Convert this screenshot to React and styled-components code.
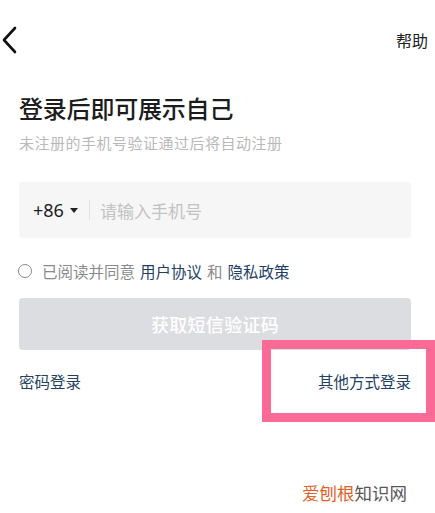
import React from 'react';
import styled, { createGlobalStyle } from 'styled-components';

const GlobalStyle = createGlobalStyle`
    html, body {
        margin: 0;
        padding: 0;
        background: #fff;
    }
    body {
        font-family: "Noto Sans", "Noto Sans CJK SC", sans-serif;
    }
`;

const Page = styled.div`
    position: relative;
    width: 435px;
    height: 513px;
    overflow: hidden;
    background: #fff;
    font-family: "Noto Sans CJK SC", "Noto Sans", sans-serif;
`;

const Header = styled.div`
    display: flex;
    align-items: center;
    justify-content: space-between;
    height: 80px;
    padding: 0 7px 0 2px;
`;

const BackButton = styled.button`
    display: flex;
    padding: 0;
    border: none;
    background: none;
`;

const HelpLink = styled.span`
    font-size: 16px;
    color: #222;
`;

const Content = styled.div`
    padding: 0 24px 0 19px;
`;

const Title = styled.h1`
    margin: 11px 0 0;
    font-size: 24px;
    line-height: 34px;
    font-weight: 500;
    color: #1c1c1c;
    letter-spacing: -0.2px;
`;

const Subtitle = styled.p`
    margin: 7px 0 0;
    font-size: 15px;
    line-height: 22px;
    color: #b9b9b9;
    letter-spacing: 0.5px;
`;

const PhoneField = styled.div`
    display: flex;
    align-items: center;
    height: 56px;
    margin-top: 28px;
    padding-left: 14px;
    background: #f6f6f6;
    border-radius: 3px;
`;

const AreaCode = styled.span`
    font-family: "Noto Sans", sans-serif;
    font-size: 18px;
    color: #1e1e1e;
`;

const Caret = styled.span`
    width: 0;
    height: 0;
    margin-left: 6px;
    border-left: 4.5px solid transparent;
    border-right: 4.5px solid transparent;
    border-top: 5px solid #222;
`;

const Divider = styled.span`
    width: 1px;
    height: 20px;
    margin: 0 10px 0 11px;
    background: #e2e2e2;
`;

const Placeholder = styled.span`
    font-size: 17px;
    color: #c2c2c2;
`;

const AgreeRow = styled.div`
    display: flex;
    align-items: center;
    gap: 10px;
    margin-top: 22px;
    font-size: 15.5px;
    line-height: 22px;
    color: #8a8a8a;
`;

const Radio = styled.span`
    box-sizing: border-box;
    width: 14px;
    height: 14px;
    margin-left: -1px;
    border: 1.5px solid #8a8a8a;
    border-radius: 50%;
    flex-shrink: 0;
`;

const Link = styled.span`
    color: ${(p) => p.color || '#1f3e66'};
    margin: 0 ${(p) => p.gap || 0}px;
`;

const CodeButton = styled.button`
    display: block;
    width: 100%;
    height: 52px;
    margin-top: 16px;
    border: none;
    border-radius: 4px;
    background: #dcdde0;
    color: #fff;
    font-family: inherit;
    font-size: 18px;
    font-weight: 500;
    letter-spacing: 0.3px;
`;

const AltRow = styled.div`
    display: flex;
    justify-content: space-between;
    margin-top: 20px;
    font-size: 15.5px;
    line-height: 22px;
    color: #243f5f;
`;

const Highlight = styled.div`
    position: absolute;
    left: 262px;
    top: 340px;
    width: 173px;
    height: 82px;
    box-sizing: border-box;
    border: 9px solid #f96b96;
`;

const Watermark = styled.div`
    position: absolute;
    left: 302px;
    top: 482px;
    font-size: 17.5px;
    line-height: 22px;
    color: #575757;
`;

const Brand = styled.span`
    color: #e06228;
`;

export default function App() {
    return (
        <>
            <GlobalStyle />
            <Page>
                <Header>
                    <BackButton>
                        <svg width="16" height="28" viewBox="0 0 16 28">
                            <polyline
                                points="13,2 2,14 13,26"
                                fill="none"
                                stroke="#111"
                                strokeWidth="2.6"
                                strokeLinecap="round"
                                strokeLinejoin="round"
                            />
                        </svg>
                    </BackButton>
                    <HelpLink>帮助</HelpLink>
                </Header>
                <Content>
                    <Title>登录后即可展示自己</Title>
                    <Subtitle>未注册的手机号验证通过后将自动注册</Subtitle>
                    <PhoneField>
                        <AreaCode>+86</AreaCode>
                        <Caret />
                        <Divider />
                        <Placeholder>请输入手机号</Placeholder>
                    </PhoneField>
                    <AgreeRow>
                        <Radio />
                        <span>
                            已阅读并同意<Link gap={5}>用户协议</Link>和<Link gap={5}>隐私政策</Link>
                        </span>
                    </AgreeRow>
                    <CodeButton>获取短信验证码</CodeButton>
                    <AltRow>
                        <span>密码登录</span>
                        <span>其他方式登录</span>
                    </AltRow>
                </Content>
                <Highlight />
                <Watermark>
                    <Brand>爱刨根</Brand>知识网
                </Watermark>
            </Page>
        </>
    );
}
